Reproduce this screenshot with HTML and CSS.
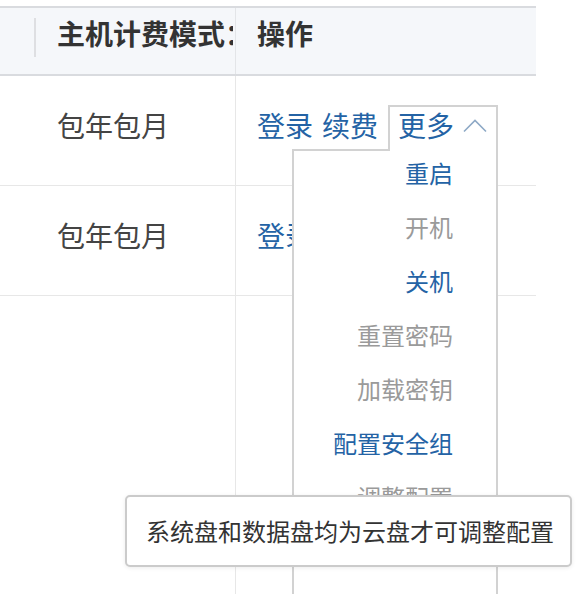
FILE: index.html
```html
<!DOCTYPE html>
<html lang="zh-CN">
<head>
  <meta charset="UTF-8">
  <title>实例列表</title>
  <meta name="viewport" content="width=device-width, initial-scale=1.0">
  <link rel="stylesheet" href="styles.css">
</head>
<body>
  <div class="table">
    <div class="thead">
      <div class="th th-mode"><span class="th-label">主机计费模式：</span></div>
      <div class="th th-ops">操作</div>
    </div>

    <div class="row">
      <div class="td td-mode">包年包月</div>
      <div class="td td-ops">
        <a class="link" href="#">登录</a>
        <a class="link" href="#">续费</a>
        <div class="more open">
          更多
          <svg class="chev" width="24" height="14" viewBox="0 0 24 14"><polyline points="1,12.5 12,1.5 23,12.5" /></svg>
        </div>
        <ul class="menu">
          <li class="on">重启</li>
          <li>开机</li>
          <li class="on">关机</li>
          <li>重置密码</li>
          <li>加载密钥</li>
          <li class="on">配置安全组</li>
          <li>调整配置
            <div class="tip">系统盘和数据盘均为云盘才可调整配置</div>
          </li>
        </ul>
      </div>
    </div>

    <div class="row">
      <div class="td td-mode">包年包月</div>
      <div class="td td-ops">
        <a class="link" href="#">登录</a>
        <a class="link" href="#">续费</a>
        <div class="more">
          更多
          <svg class="chev" width="24" height="14" viewBox="0 0 24 14"><polyline points="1,1.5 12,12.5 23,1.5" /></svg>
        </div>
      </div>
    </div>

    <div class="row row-empty">
      <div class="td td-mode"></div>
      <div class="td td-ops"></div>
    </div>
  </div>
</body>
</html>
```

FILE: styles.css
```css
body {
  margin: 0;
  height: 594px;
  overflow: hidden;
  background: #ffffff;
  font-family: "Noto Sans CJK SC", "Noto Sans", sans-serif;
}
.table {
  width: 536px;
  margin-top: 6px;
}
.thead {
  display: grid;
  grid-template-columns: 235px 301px;
  height: 70px;
  box-sizing: border-box;
  background: #f5f7fa;
  border-top: 2px solid #d9dbdf;
  border-bottom: 2px solid #d9dbdf;
}
.th {
  padding-top: 10px;
  font-size: 28px;
  font-weight: 700;
  line-height: 31px;
  color: #333333;
  white-space: nowrap;
  overflow: hidden;
}
.th-mode {
  padding-left: 34px;
  padding-right: 2px;
}
.th-label {
  display: block;
  border-left: 2px solid #dedfe2;
  padding-left: 21px;
  padding-bottom: 8px;
  overflow: hidden;
}
.th-ops {
  border-left: 1px solid #e3e5e8;
  padding-left: 21px;
}
.row {
  display: grid;
  grid-template-columns: 235px 301px;
  height: 110px;
  box-sizing: border-box;
  border-bottom: 1px solid #e7e7e7;
}
.row-empty {
  height: 320px;
  border-bottom: none;
}
.td {
  padding-top: 29px;
  font-size: 28px;
  line-height: 40px;
  color: #444444;
}
.td-mode {
  padding-left: 57px;
}
.td-ops {
  position: relative;
  display: flex;
  align-items: flex-start;
  border-left: 1px solid #e7e7e7;
  padding-left: 21px;
}
.link {
  color: #2463a5;
  text-decoration: none;
  margin-right: 9px;
}
.more {
  display: flex;
  align-items: center;
  margin-left: 1px;
  padding: 0 9px 8px 8px;
  line-height: 36px;
  color: #2463a5;
  border: 2px solid #d2d2d2;
  border-bottom: none;
  background: #ffffff;
}
.more.open {
  position: relative;
  z-index: 3;
}
.chev {
  margin-left: 9px;
  margin-top: 2px;
}
.chev polyline {
  fill: none;
  stroke: #8ea9c6;
  stroke-width: 1.6;
}
.menu {
  position: absolute;
  z-index: 2;
  left: 56px;
  top: 73px;
  width: 206px;
  height: 520px;
  box-sizing: border-box;
  margin: 0;
  padding: 0;
  list-style: none;
  background: #ffffff;
  border: 2px solid #d2d2d2;
}
.menu li {
  position: relative;
  padding-right: 43px;
  font-size: 24px;
  line-height: 54px;
  text-align: right;
  color: #9a9a9a;
}
.menu li:first-child {
  margin-top: -5px;
}
.menu li.on {
  color: #2463a5;
}
.tip {
  position: absolute;
  left: -169px;
  top: 25px;
  width: 447px;
  height: 72px;
  box-sizing: border-box;
  padding-left: 19px;
  border: 2px solid #cbcbcb;
  border-radius: 5px;
  background: #ffffff;
  box-shadow: 0 1px 4px rgba(0,0,0,0.08);
  font-size: 24px;
  line-height: 68px;
  color: #333333;
  text-align: left;
  white-space: nowrap;
}
```
